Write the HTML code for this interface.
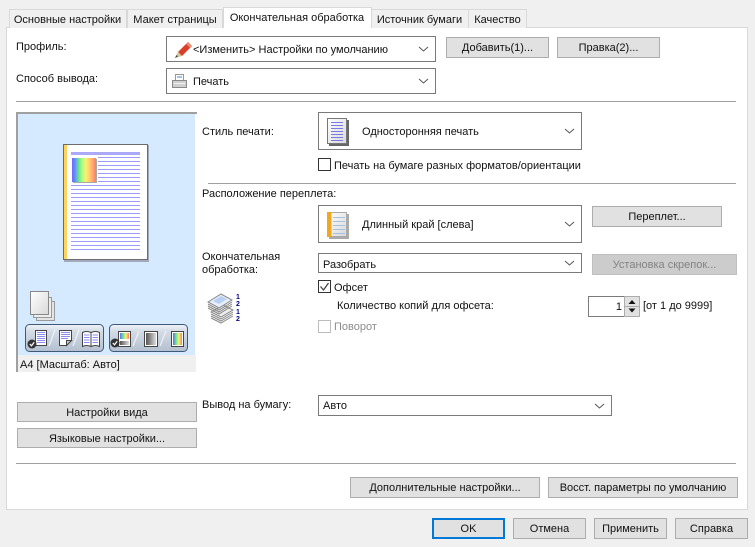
<!DOCTYPE html>
<html><head><meta charset="utf-8"><style>
*{box-sizing:border-box}
html,body{margin:0;padding:0}
body{width:755px;height:547px;background:#f0f0f0;position:relative;overflow:hidden;font:11px "Liberation Sans",sans-serif;color:#111}
.a{position:absolute}
.t{position:absolute;white-space:nowrap;line-height:14px}
.b{position:absolute;background:#e1e1e1;border:1px solid #adadad;text-align:center;white-space:nowrap;line-height:21px}
.s{position:absolute;background:#fff;border:1px solid #7a7a7a}
.s svg{position:absolute;right:6px;top:50%;margin-top:-3px}
.tab{position:absolute;top:9px;height:19px;background:#f0f0f0;border:1px solid #d9d9d9;border-bottom:none;white-space:nowrap;line-height:20px;text-align:center}
.hr{position:absolute;height:1px;background:#a0a0a0}
.c{position:absolute;width:13px;height:13px;background:#fff;border:1px solid #333}
</style></head><body>
<div class="a" style="left:6px;top:27px;width:742px;height:483px;background:#fff;border:1px solid #d9d9d9"></div>
<div class="tab" style="left:9px;width:118px;text-indent:-1px">Основные настройки</div>
<div class="tab" style="left:127px;width:96px">Макет страницы</div>
<div class="tab" style="left:223px;top:7px;width:149px;height:21px;background:#fff;line-height:20px;text-indent:-1px">Окончательная обработка</div>
<div class="tab" style="left:371px;width:98px;text-indent:-1px">Источник бумаги</div>
<div class="tab" style="left:468px;width:59px">Качество</div>

<div class="t" style="left:16px;top:40px">Профиль:</div>
<div class="t" style="left:16px;top:72px">Способ вывода:</div>
<div class="s" style="left:166px;top:36px;width:270px;height:26px"><svg width="11" height="6"><path d="M1 1l4.500 4L10 1" fill="none" stroke="#555"/></svg></div>
<div class="s" style="left:166px;top:68px;width:270px;height:26px"><svg width="11" height="6"><path d="M1 1l4.500 4L10 1" fill="none" stroke="#555"/></svg></div>
<svg class="a" style="left:175px;top:41px" width="18" height="17"><path d="M3 11L13 1l4 4L7 15z" fill="#d8402a"/><path d="M13 1l4 4-2 2-4-4z" fill="#e88a70"/><path d="M0 17l3-6 4 4z" fill="#d9c49a"/><path d="M0 17l1.500-3 1.500 1.500z" fill="#444"/></svg>
<div class="t" style="left:193px;top:43px">&lt;Изменить&gt; Настройки по умолчанию</div>
<svg class="a" style="left:172px;top:74px" width="15" height="15"><rect x="3.500" y=".5" width="8" height="7" fill="#fff" stroke="#999"/><rect x="5" y="2" width="5" height="2" fill="#9fc4e8"/><rect x=".5" y="6.500" width="14" height="7" fill="#d0d0d0" stroke="#8a8a8a"/><rect x="2" y="9" width="11" height="1" fill="#f2f2f2"/></svg>
<div class="t" style="left:193px;top:75px">Печать</div>
<div class="b" style="left:446px;top:37px;width:103px;height:21px">Добавить(1)...</div>
<div class="b" style="left:557px;top:37px;width:103px;height:21px">Правка(2)...</div>
<div class="hr" style="left:16px;top:101px;width:720px"></div>

<div class="a" style="left:16px;top:112px;width:181px;height:2px;background:#a0a0a0"></div>
<div class="a" style="left:16px;top:112px;width:2px;height:260px;background:#a0a0a0"></div>
<div class="a" style="left:18px;top:114px;width:177px;height:241px;background:#d5e9ff"></div>
<div class="a" style="left:18px;top:355px;width:178px;height:17px;background:#f0f0f0"></div>
<div class="t" style="left:20px;top:358px">A4 [Масштаб: Авто]</div>

<svg class="a" style="left:63px;top:144px" width="87" height="118">
<rect x="1" y="1" width="85" height="117" fill="#a3a9bd"/>
<rect x=".5" y=".5" width="84" height="115" fill="#fff" stroke="#6c6c6c"/>
<rect x="1" y="1" width="3" height="114" fill="#ffd45c"/>
<rect x="8" y="8" width="69" height="3" fill="#aaaaf8"/>
<path d="M35 13.500h42M35 17.500h42M35 21.500h42M35 25.500h42M35 29.500h42M35 33.500h42M35 37.500h42M8 41.500h69M8 45.500h69M8 49.500h69M8 53.500h69M8 57.500h69M8 61.500h69M8 65.500h69M8 69.500h69M8 73.500h69M8 77.500h69M8 81.500h69M8 85.500h69M8 89.500h69M8 93.500h69M8 97.500h69M8 101.500h69M8 105.500h69" stroke="#9c9cff" shape-rendering="crispEdges"/>
<rect x="10" y="15" width="24" height="24" fill="#aaa"/>
</svg>
<div class="a" style="left:72px;top:158px;width:24px;height:24px;background:linear-gradient(90deg,#6a6aff 0,#6a8aff 12%,#66e890 28%,#a8ff80 42%,#ffef70 58%,#ffc070 78%,#ff7a70 100%)"></div>

<svg class="a" style="left:25px;top:288px" width="168" height="66">
<defs><linearGradient id="bt" x1="0" y1="0" x2="0" y2="1"><stop offset="0" stop-color="#f0f4f8"/><stop offset=".25" stop-color="#d4dce6"/><stop offset="1" stop-color="#b4c0d0"/></linearGradient>
<linearGradient id="rb" x1="0" y1="0" x2="1" y2="0"><stop offset="0" stop-color="#6a6aff"/><stop offset=".35" stop-color="#66e890"/><stop offset=".65" stop-color="#ffef70"/><stop offset="1" stop-color="#ff7a70"/></linearGradient>
<linearGradient id="gr" x1="0" y1="0" x2="1" y2="0"><stop offset="0" stop-color="#555"/><stop offset="1" stop-color="#ddd"/></linearGradient>
<linearGradient id="pg" x1="0" y1="0" x2="1" y2="1"><stop offset="0" stop-color="#fff"/><stop offset="1" stop-color="#d8d8d8"/></linearGradient></defs>
<rect x="11.500" y="13.500" width="18" height="19" fill="#e4e4e4" stroke="#999"/>
<rect x="8.500" y="9.500" width="18" height="20" fill="#eee" stroke="#999"/>
<rect x="5.500" y="3.500" width="18" height="23" fill="url(#pg)" stroke="#888"/>
<rect x=".5" y="36.500" width="78" height="27" rx="4" fill="url(#bt)" stroke="#3f5a78"/>
<rect x="84.500" y="36.500" width="78" height="27" rx="4" fill="url(#bt)" stroke="#3f5a78"/>
<!-- left group -->
<rect x="10.500" y="42.500" width="11" height="15" fill="#fff" stroke="#444"/>
<path d="M12 44.500h8M12 46.500h8M12 48.500h8M12 50.500h8M12 52.500h8M12 54.500h8" stroke="#8a8af0"/>
<circle cx="7" cy="56" r="4.500" fill="#333"/><path d="M4.800 56l1.700 1.800 2.700-3.500" fill="none" stroke="#fff" stroke-width="1.200"/>
<path d="M24 58l6-16" stroke="#eef2f6" stroke-width="1.200"/>
<path d="M34.500 42.500h12v10l-5 5h-7z" fill="#fff" stroke="#444"/><path d="M36 44.500h9M36 46.500h9M36 48.500h9M36 50.500h7" stroke="#8a8af0"/><path d="M41.500 57.500v-5h5z" fill="#ccc" stroke="#444"/>
<path d="M48 58l6-16" stroke="#eef2f6" stroke-width="1.200"/>
<path d="M57.500 44.500q4-2 8.500 0v14q-4.500-2-8.500 0zM66 44.500q4.500-2 8.500 0v14q-4-2-8.500 0z" fill="#fff" stroke="#444"/>
<path d="M59 47h5.500M59 49.500h5.500M59 52h5.500M59 54.500h5.500M67.500 47h5.500M67.500 49.500h5.500M67.500 52h5.500M67.500 54.500h5.500" stroke="#8a8af0"/>
<!-- right group -->
<rect x="93.500" y="43.500" width="12" height="15" fill="#fff" stroke="#444"/>
<rect x="95" y="45" width="9" height="6" fill="url(#rb)"/><rect x="95" y="53" width="9" height="4" fill="url(#gr)"/>
<circle cx="90" cy="55" r="4.500" fill="#333"/><path d="M87.800 55l1.700 1.800 2.700-3.500" fill="none" stroke="#fff" stroke-width="1.200"/>
<path d="M108 58l6-15" stroke="#eef2f6" stroke-width="1.200"/>
<rect x="119.500" y="43.500" width="13" height="15" fill="#fff" stroke="#444"/><rect x="121" y="45" width="10" height="12" fill="url(#gr)"/>
<path d="M135 58l6-15" stroke="#eef2f6" stroke-width="1.200"/>
<rect x="146.500" y="43.500" width="12" height="15" fill="#fff" stroke="#444"/><rect x="148" y="45" width="9" height="12" fill="url(#rb)"/>
</svg>

<div class="b" style="left:17px;top:402px;width:180px;height:20px;line-height:20px">Настройки вида</div>
<div class="b" style="left:17px;top:428px;width:180px;height:20px;line-height:20px">Языковые настройки...</div>

<div class="t" style="left:202px;top:125px">Стиль печати:</div>
<div class="s" style="left:318px;top:112px;width:264px;height:38px"><svg width="11" height="6"><path d="M1 1l4.500 4L10 1" fill="none" stroke="#555"/></svg></div>
<svg class="a" style="left:327px;top:118px" width="22" height="28"><rect x="2" y="2" width="20" height="26" fill="#666"/><rect x=".5" y=".5" width="19" height="25" fill="url(#pg)" stroke="#777"/><path d="M4 4.500h12M4 7.500h12M4 10.500h12M4 13.500h12M4 16.500h12M4 19.500h12M4 22.500h12" stroke="#7878e8"/></svg>
<div class="t" style="left:362px;top:125px">Односторонняя печать</div>
<div class="c" style="left:318px;top:158px"></div>
<div class="t" style="left:334px;top:159px">Печать на бумаге разных форматов/ориентации</div>
<div class="hr" style="left:208px;top:183px;width:528px"></div>
<div class="t" style="left:202px;top:187px">Расположение переплета:</div>
<div class="s" style="left:318px;top:205px;width:264px;height:38px"><svg width="11" height="6"><path d="M1 1l4.500 4L10 1" fill="none" stroke="#555"/></svg></div>
<svg class="a" style="left:327px;top:212px" width="22" height="27"><rect x="2" y="2" width="20" height="25" fill="#aaa"/><rect x=".5" y=".5" width="19" height="24" fill="url(#pg)" stroke="#aaa"/><rect x="0" y="0" width="4.500" height="25" fill="#f0a820"/><path d="M6 5.500h12M6 9.500h12M6 13.500h12M6 17.500h12M6 21.500h12" stroke="#a8c0e0"/></svg>
<div class="t" style="left:362px;top:218px">Длинный край [слева]</div>
<div class="b" style="left:592px;top:206px;width:130px;height:21px">Переплет...</div>
<div class="t" style="left:202px;top:251px;line-height:13px">Окончательная<br>обработка:</div>
<div class="s" style="left:318px;top:253px;width:264px;height:20px"><svg width="11" height="6"><path d="M1 1l4.500 4L10 1" fill="none" stroke="#555"/></svg></div>
<div class="t" style="left:323px;top:258px">Разобрать</div>
<div class="b" style="left:592px;top:254px;width:145px;height:21px;background:#ccc;border-color:#bfbfbf;color:#838383">Установка скрепок...</div>
<div class="c" style="left:318px;top:280px"></div>
<svg class="a" style="left:318px;top:280px" width="13" height="13"><path d="M2.500 6.500l3 3.500 5-7" fill="none" stroke="#444" stroke-width="1.300"/></svg>
<div class="t" style="left:334px;top:281px">Офсет</div>
<div class="t" style="left:337px;top:299px">Количество копий для офсета:</div>
<div class="c" style="left:318px;top:320px;border-color:#bcbcbc"></div>
<div class="t" style="left:334px;top:320px;color:#8c8c8c">Поворот</div>
<svg class="a" style="left:207px;top:291px" width="36" height="34">
<path d="M4 21l12-7 10 5-12 7z" fill="#eee" stroke="#888"/><path d="M4 23l10 5 12-7M4 25l10 5 12-7M4 27l10 5 12-7" fill="none" stroke="#888"/>
<path d="M1 11l13-8 11 6-13 8z" fill="#e6eefc" stroke="#888"/><path d="M1 13l11 6 13-8M1 15l11 6 13-8M1 17l11 6 13-8" fill="none" stroke="#888"/>
<path d="M6 10l8-5 6 3-8 5z" fill="#b8d0f4"/>
<text x="29" y="8" font-size="7" font-family="Liberation Sans" font-weight="bold" fill="#000088">1</text>
<text x="29" y="15" font-size="7" font-family="Liberation Sans" font-weight="bold" fill="#000088">2</text>
<text x="29" y="23" font-size="7" font-family="Liberation Sans" font-weight="bold" fill="#000088">1</text>
<text x="29" y="30" font-size="7" font-family="Liberation Sans" font-weight="bold" fill="#000088">2</text>
</svg>
<div class="s" style="left:588px;top:296px;width:37px;height:21px;text-align:right;padding-right:2px;line-height:20px">1</div>
<div class="a" style="left:624px;top:296px;width:16px;height:21px;background:#e1e1e1;border:1px solid #adadad"></div>
<div class="hr" style="left:625px;top:306px;width:14px;background:#adadad"></div>
<svg class="a" style="left:624px;top:296px" width="16" height="21"><path d="M8 4l3.500 4h-7zM8 16.500l-3.500-4h7z" fill="#111"/></svg>
<div class="t" style="left:643px;top:299px">[от 1 до 9999]</div>
<div class="t" style="left:202px;top:398px">Вывод на бумагу:</div>
<div class="s" style="left:318px;top:395px;width:294px;height:21px"><svg width="11" height="6"><path d="M1 1l4.500 4L10 1" fill="none" stroke="#555"/></svg></div>
<div class="t" style="left:323px;top:399px">Авто</div>
<div class="hr" style="left:16px;top:463px;width:720px"></div>
<div class="b" style="left:350px;top:477px;width:190px;height:21px">Дополнительные настройки...</div>
<div class="b" style="left:548px;top:477px;width:190px;height:21px">Восст. параметры по умолчанию</div>
<div class="b" style="left:432px;top:518px;width:73px;height:21px;border:2px solid #0078d7;line-height:19px">OK</div>
<div class="b" style="left:513px;top:518px;width:73px;height:21px">Отмена</div>
<div class="b" style="left:594px;top:518px;width:73px;height:21px">Применить</div>
<div class="b" style="left:675px;top:518px;width:73px;height:21px">Справка</div>
</body></html>
